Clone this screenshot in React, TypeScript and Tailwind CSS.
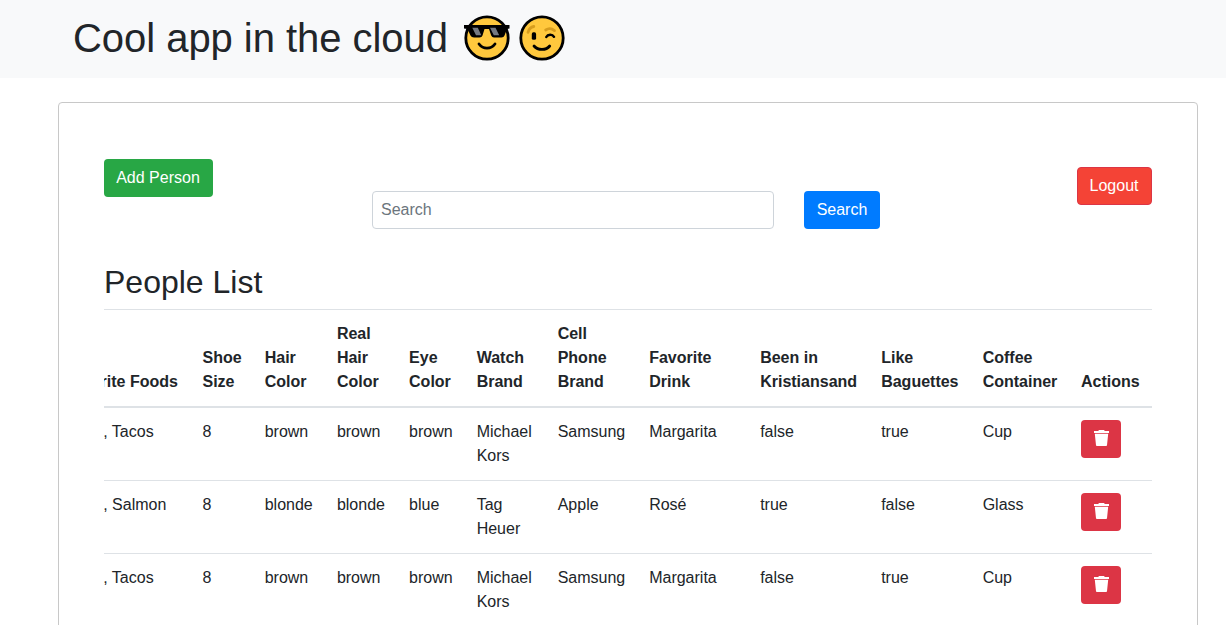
import React from "react";

const columns = [
  { label: "Favorite Foods", width: "w-[139.3px]" },
  { label: "Shoe Size", width: "w-[62.2px]" },
  { label: "Hair Color", width: "w-[72.2px]" },
  { label: "Real Hair Color", width: "w-[72.2px]" },
  { label: "Eye Color", width: "w-[67.6px]" },
  { label: "Watch Brand", width: "w-[81px]" },
  { label: "Cell Phone Brand", width: "w-[91.5px]" },
  { label: "Favorite Drink", width: "w-[111px]" },
  { label: "Been in Kristiansand", width: "w-[121px]" },
  { label: "Like Baguettes", width: "w-[101.5px]" },
  { label: "Coffee Container", width: "w-[98.3px]" },
  { label: "Actions", width: "w-[83px]" },
];

const people = [
  ["Sushi, Tacos", "8", "brown", "brown", "brown", "Michael Kors", "Samsung", "Margarita", "false", "true", "Cup"],
  ["Sushi, Salmon", "8", "blonde", "blonde", "blue", "Tag Heuer", "Apple", "Rosé", "true", "false", "Glass"],
  ["Sushi, Tacos", "8", "brown", "brown", "brown", "Michael Kors", "Samsung", "Margarita", "false", "true", "Cup"],
];

function CoolFace() {
  return (
    <svg className="h-[46px] w-[46px]" viewBox="0 0 46 46" fill="none" role="img" aria-label="cool face">
      <circle cx="23" cy="23" r="21.2" fill="#ffc83d" stroke="#000" strokeWidth="2.8" />
      <path d="M0 10H45.5V13.5L43 14L40.5 20.5Q39.8 22.5 37.5 22.5H30Q28 22.5 27.2 20.5L25 14H20.5L18.5 20.5Q17.8 22.5 15.5 22.5H10Q7.5 22.5 6.5 20.5L3.5 14L0 13.5Z" fill="#000" />
      <path d="M8.3 12.7H13.8L17.3 20.3H12ZM26 12.7H31.5L35.2 20.3H29.8Z" fill="#747981" />
      <path d="M15 29C19 34.5 27 34.5 31 29" stroke="#000" strokeWidth="2.8" strokeLinecap="round" />
    </svg>
  );
}

function WinkFace() {
  return (
    <svg className="h-[46px] w-[46px]" viewBox="0 0 46 46" fill="none" role="img" aria-label="winking face">
      <circle cx="23" cy="23" r="21.2" fill="#ffc83d" stroke="#000" strokeWidth="2.8" />
      <path d="M9 17.3C9.8 14.3 12 12 14.8 11.5M26.7 15C29.5 13.2 32.9 13.5 35.5 15.6" stroke="#d79d1e" strokeWidth="2.8" strokeLinecap="round" />
      <rect x="12.8" y="17.3" width="4.3" height="7.5" rx="1.6" fill="#000" />
      <path d="M27.3 22C28.8 19.2 33.3 19 35 21.8" stroke="#000" strokeWidth="2.5" strokeLinecap="round" />
      <path d="M15 31C19 35.6 27 35.6 30.7 31" stroke="#000" strokeWidth="2.8" strokeLinecap="round" />
    </svg>
  );
}

function TrashIcon() {
  return (
    <svg className="h-4 w-[15px]" viewBox="0 0 15 16" fill="#fff" aria-hidden="true">
      <path d="M0 1H4.2L5 0H10L10.8 1H15V3H0ZM.8 3.7H14.2L13 15.2Q12.9 16 12.1 16H2.9Q2.1 16 2 15.2Z" />
    </svg>
  );
}

export default function App() {
  return (
    <div className="h-[625px] overflow-hidden bg-white font-['Liberation_Sans',Arial,sans-serif] text-base leading-6 text-[#212529]">
      <header className="flex h-[78px] items-center bg-[#f8f9fa] pb-0.5 pl-[73px]">
        <h1 className="w-[391px] text-[40px] leading-[48px] tracking-[-0.04px] whitespace-nowrap">Cool app in the cloud</h1>
        <div className="flex gap-[9px]">
          <CoolFace />
          <WinkFace />
        </div>
      </header>
      <main className="mt-6 ml-[58px] h-[600px] w-[1140px] rounded border border-[#c8c8c8] px-[45px] pt-14">
        <div className="flex items-start">
          <button className="h-[38px] w-[109px] rounded bg-[#28a745] pr-px text-white">Add Person</button>
          <form className="mt-8 ml-[159px] flex gap-[30px]">
            <input
              type="text"
              placeholder="Search"
              className="h-[38px] w-[402px] rounded border border-[#ced4da] px-2 placeholder:text-[#6c757d]"
            />
            <button type="button" className="h-[38px] w-[76px] rounded bg-[#007bff] text-white">Search</button>
          </form>
          <button className="mt-2 ml-auto h-[38px] w-[75px] rounded border border-[#dc3545] bg-[#f44336] pr-px text-white">Logout</button>
        </div>
        <h2 className="mt-[34px] mb-2 text-[32px] leading-[38px]">People List</h2>
        <div className="flex w-[1048px] justify-end overflow-hidden">
          <table className="w-[1100.8px] shrink-0 table-fixed border-separate border-spacing-0 text-left">
            <colgroup>
              {columns.map((c) => (
                <col key={c.label} className={c.width} />
              ))}
            </colgroup>
            <thead>
              <tr>
                {columns.map((c) => (
                  <th key={c.label} className="border-t border-b-2 border-t-[#dee2e6] border-b-[#dee2e6] p-3 align-bottom font-bold">
                    {c.label}
                  </th>
                ))}
              </tr>
            </thead>
            <tbody className="[&>tr+tr>td]:border-t [&>tr+tr>td]:border-[#dee2e6]">
              {people.map((person, i) => (
                <tr key={i}>
                  {person.map((value, j) => (
                    <td key={j} className="p-3 align-top">{value}</td>
                  ))}
                  <td className="p-3 align-top">
                    <button aria-label="Delete" className="flex h-[38px] w-10 justify-center rounded bg-[#dc3545] pt-[10px] pl-px">
                      <TrashIcon />
                    </button>
                  </td>
                </tr>
              ))}
            </tbody>
          </table>
        </div>
      </main>
    </div>
  );
}
